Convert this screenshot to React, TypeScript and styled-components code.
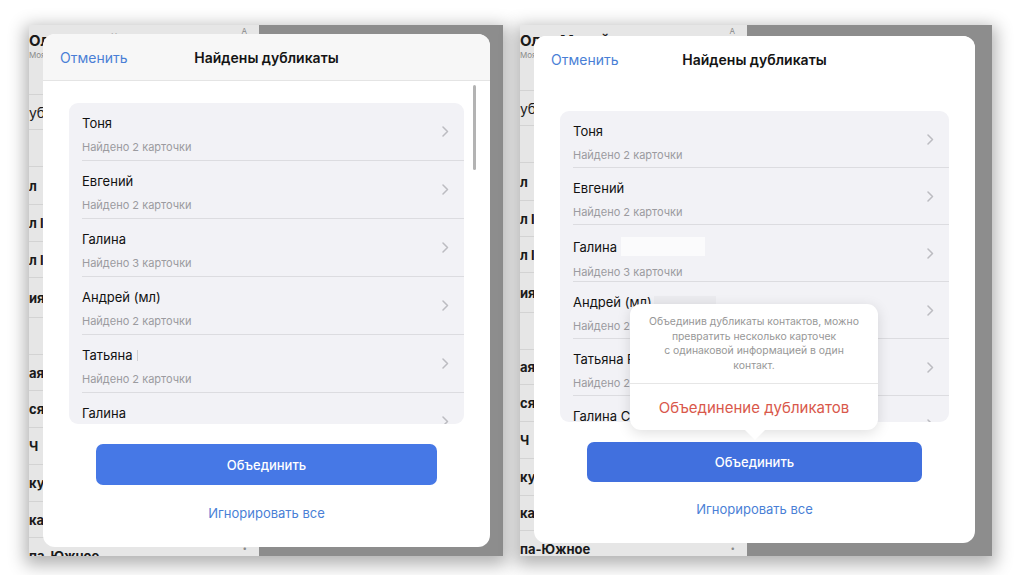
import React from "react";
import styled, { createGlobalStyle } from "styled-components";

const Global = createGlobalStyle`
  html, body { margin: 0; padding: 0; background: #ffffff; }
  body {
    width: 1022px; height: 575px; overflow: hidden;
    font-family: Inter, "Noto Sans", "Liberation Sans", sans-serif;
    -webkit-font-smoothing: antialiased;
  }
`;

const Page = styled.div`
  display: flex;
  gap: 17px;
  padding: 25px 0 0 29px;
`;

const Frame = styled.div<{ $w: number; $split: number }>`
  position: relative;
  width: ${(p) => p.$w}px;
  height: 531px;
  display: grid;
  grid-template-columns: ${(p) => p.$split}px 1fr;
  overflow: hidden;
  box-shadow: 0 5px 16px 4px rgba(0, 0, 0, 0.3);
`;

const Contacts = styled.div`
  position: relative;
  background: #e6e6e6;
  display: flex;
  flex-direction: column;
`;

const ContactsHead = styled.div<{ $h: number }>`
  height: ${(p) => p.$h}px;
  flex: none;
  border-bottom: 1px solid #d3d3d3;
  box-sizing: border-box;
  padding-top: 8px;
  display: flex;
  flex-direction: column;
`;

const OwnerName = styled.div`
  font-size: 15px;
  font-weight: 700;
  color: #1a1a1a;
  white-space: nowrap;
  line-height: 16px;
`;

const OwnerSub = styled.div`
  font-size: 8px;
  color: #8a8a8a;
  line-height: 12px;
`;

const IndexMark = styled.div<{ $top: number }>`
  position: absolute;
  right: 12px;
  top: ${(p) => p.$top}px;
  font-size: 8px;
  color: #8a8a8a;
`;

const ContactRow = styled.div<{ $h: number; $bold: boolean }>`
  height: ${(p) => p.$h}px;
  flex: none;
  box-sizing: border-box;
  border-bottom: 1px solid #d3d3d3;
  display: flex;
  align-items: center;
  font-size: ${(p) => (p.$bold ? 13 : 14)}px;
  font-weight: ${(p) => (p.$bold ? 700 : 400)};
  color: #1a1a1a;
  white-space: nowrap;
`;

const Dim = styled.div`
  background: #8d8d8d;
`;

const Modal = styled.div<{ $x: number; $y: number; $w: number; $h: number }>`
  position: absolute;
  left: ${(p) => p.$x}px;
  top: ${(p) => p.$y}px;
  width: ${(p) => p.$w}px;
  height: ${(p) => p.$h}px;
  background: #ffffff;
  border-radius: 12px;
  display: flex;
  flex-direction: column;
`;

const Header = styled.div<{ $tint: boolean }>`
  height: 47px;
  flex: none;
  box-sizing: border-box;
  position: relative;
  display: flex;
  align-items: center;
  justify-content: center;
  background: ${(p) => (p.$tint ? "#f7f7f7" : "#ffffff")};
  border-bottom: 1px solid ${(p) => (p.$tint ? "#e4e4e4" : "#ffffff")};
  border-radius: 12px 12px 0 0;
`;

const Cancel = styled.span`
  position: absolute;
  left: 17px;
  top: 50%;
  transform: translateY(-50%);
  font-size: 14px;
  color: #4a7fd6;
`;

const Title = styled.span`
  font-size: 14px;
  font-weight: 600;
  color: #141414;
`;

const Body = styled.div<{ $top: number }>`
  position: relative;
  flex: 1;
  display: flex;
  flex-direction: column;
  align-items: center;
  padding: ${(p) => p.$top}px 26px 0;
`;

const Card = styled.div<{ $h: number }>`
  align-self: stretch;
  height: ${(p) => p.$h}px;
  flex: none;
  background: #f2f2f6;
  border-radius: 9px;
  overflow: hidden;
  display: flex;
  flex-direction: column;
`;

const Row = styled.div<{ $h: number }>`
  height: ${(p) => p.$h}px;
  flex: none;
  margin-left: 13px;
  padding-right: 15px;
  box-sizing: border-box;
  border-bottom: 1px solid #dcdce0;
  display: flex;
  align-items: center;
`;

const RowText = styled.div`
  flex: 1;
  align-self: flex-start;
  display: flex;
  flex-direction: column;
  gap: 9px;
  padding-top: 12px;
`;

const Name = styled.div`
  font-size: 13px;
  line-height: 16px;
  color: #111111;
  display: flex;
  align-items: center;
  white-space: nowrap;
`;

const Sub = styled.div`
  font-size: 11px;
  line-height: 14px;
  color: #9b9ba0;
`;

const Redact = styled.span<{ $w: number; $h: number; $gap: number; $c: string }>`
  display: inline-block;
  width: ${(p) => p.$w}px;
  height: ${(p) => p.$h}px;
  margin-left: ${(p) => p.$gap}px;
  background: ${(p) => p.$c};
`;

const Scrollbar = styled.div`
  position: absolute;
  right: 14px;
  top: 4px;
  width: 3px;
  height: 85px;
  border-radius: 2px;
  background: #b3b3b3;
`;

const Primary = styled.button<{ $h: number; $c: string }>`
  margin-top: 20px;
  align-self: stretch;
  margin-left: 27px;
  margin-right: 27px;
  height: ${(p) => p.$h}px;
  border: none;
  border-radius: 7px;
  background: ${(p) => p.$c};
  color: #ffffff;
  font-family: inherit;
  font-size: 13px;
  font-weight: 500;
`;

const Link = styled.div<{ $mt: number }>`
  margin-top: ${(p) => p.$mt}px;
  font-size: 13px;
  line-height: 16px;
  color: #4a7fd6;
`;

const Popover = styled.div`
  position: absolute;
  left: 96px;
  top: 268px;
  width: 248px;
  background: #ffffff;
  border-radius: 11px;
  box-shadow: 0 3px 14px rgba(0, 0, 0, 0.13);
  display: flex;
  flex-direction: column;
  &::after {
    content: "";
    position: absolute;
    left: 114px;
    bottom: -10px;
    border-left: 11px solid transparent;
    border-right: 11px solid transparent;
    border-top: 11px solid #ffffff;
  }
`;

const PopText = styled.div`
  padding: 11px 10px 10px;
  font-size: 10.4px;
  line-height: 14.6px;
  color: #979797;
  text-align: center;
  border-bottom: 1px solid #e6e6e6;
`;

const PopAction = styled.div`
  height: 46px;
  display: flex;
  align-items: center;
  justify-content: center;
  font-size: 15px;
  color: #d9584b;
`;

const Chevron = () => (
  <svg width="7" height="11" viewBox="0 0 7 11">
    <polyline points="1,1 5.5,5.5 1,10" fill="none" stroke="#bcbcc1" strokeWidth="1.5" strokeLinecap="round" strokeLinejoin="round" />
  </svg>
);

type Dup = { name: string; sub: string; redact?: { w: number; h: number; gap: number; c: string } };

const leftDups: Dup[] = [
  { name: "Тоня", sub: "Найдено 2 карточки" },
  { name: "Евгений", sub: "Найдено 2 карточки" },
  { name: "Галина", sub: "Найдено 3 карточки" },
  { name: "Андрей (мл)", sub: "Найдено 2 карточки" },
  { name: "Татьяна", sub: "Найдено 2 карточки", redact: { w: 1, h: 11, gap: 5, c: "#cfcfd3" } },
  { name: "Галина", sub: "Найдено 2 карточки" },
];

const rightDups: Dup[] = [
  { name: "Тоня", sub: "Найдено 2 карточки" },
  { name: "Евгений", sub: "Найдено 2 карточки" },
  { name: "Галина", sub: "Найдено 3 карточки", redact: { w: 84, h: 19, gap: 4, c: "#fbfbfc" } },
  { name: "Андрей (мл)", sub: "Найдено 2 карточки", redact: { w: 62, h: 12, gap: 2, c: "#ebebef" } },
  { name: "Татьяна Романова", sub: "Найдено 2 карточки" },
  { name: "Галина Сергеевна", sub: "Найдено 2 карточки" },
];

const bgRows: { t: string; h: number; bold: boolean }[] = [
  { t: "убликаты", h: 35, bold: false },
  { t: "", h: 37, bold: true },
  { t: "л", h: 38, bold: true },
  { t: "л I", h: 37, bold: true },
  { t: "л I", h: 36, bold: true },
  { t: "ия", h: 40, bold: true },
  { t: "", h: 37, bold: true },
  { t: "ая", h: 36, bold: true },
  { t: "ся", h: 37, bold: true },
  { t: "Ч", h: 37, bold: true },
  { t: "ку", h: 37, bold: true },
  { t: "ка", h: 36, bold: true },
  { t: "па-Южное", h: 37, bold: true },
];

type ShotProps = {
  variant: "left" | "right";
};

const Shot = ({ variant }: ShotProps) => {
  const isLeft = variant === "left";
  const dups = isLeft ? leftDups : rightDups;
  const rowH = isLeft ? 58 : 57;
  return (
    <Frame $w={isLeft ? 474 : 472} $split={isLeft ? 230 : 227}>
      <Contacts>
        <ContactsHead $h={isLeft ? 70 : 66}>
          <OwnerName>Олег Михайлов</OwnerName>
          <OwnerSub>Моя карточка</OwnerSub>
        </ContactsHead>
        {bgRows.map((r, i) => (
          <ContactRow key={i} $h={isLeft ? r.h : r.h - (i % 4 === 3 ? 1 : 0)} $bold={r.bold}>
            {r.t}
          </ContactRow>
        ))}
        <IndexMark $top={1}>A</IndexMark>
        <IndexMark $top={518}>•</IndexMark>
      </Contacts>
      <Dim />
      <Modal $x={14} $y={isLeft ? 9 : 11} $w={isLeft ? 447 : 441} $h={isLeft ? 513 : 507}>
        <Header $tint={isLeft}>
          <Cancel>Отменить</Cancel>
          <Title>Найдены дубликаты</Title>
        </Header>
        <Body $top={isLeft ? 22 : 28}>
          <Card $h={isLeft ? 321 : 311}>
            {dups.map((d, i) => (
              <Row key={i} $h={rowH}>
                <RowText>
                  <Name>
                    {d.name}
                    {d.redact && <Redact $w={d.redact.w} $h={d.redact.h} $gap={d.redact.gap} $c={d.redact.c} />}
                  </Name>
                  <Sub>{d.sub}</Sub>
                </RowText>
                <Chevron />
              </Row>
            ))}
          </Card>
          {isLeft && <Scrollbar />}
          <Primary $h={isLeft ? 41 : 40} $c={isLeft ? "#4678e6" : "#4170de"}>
            Объединить
          </Primary>
          <Link $mt={isLeft ? 20 : 19}>Игнорировать все</Link>
        </Body>
        {!isLeft && (
          <Popover>
            <PopText>
              Объединив дубликаты контактов, можно
              <br />
              превратить несколько карточек
              <br />с одинаковой информацией в один
              <br />
              контакт.
            </PopText>
            <PopAction>Объединение дубликатов</PopAction>
          </Popover>
        )}
      </Modal>
    </Frame>
  );
};

export default function App() {
  return (
    <>
      <Global />
      <Page>
        <Shot variant="left" />
        <Shot variant="right" />
      </Page>
    </>
  );
}
